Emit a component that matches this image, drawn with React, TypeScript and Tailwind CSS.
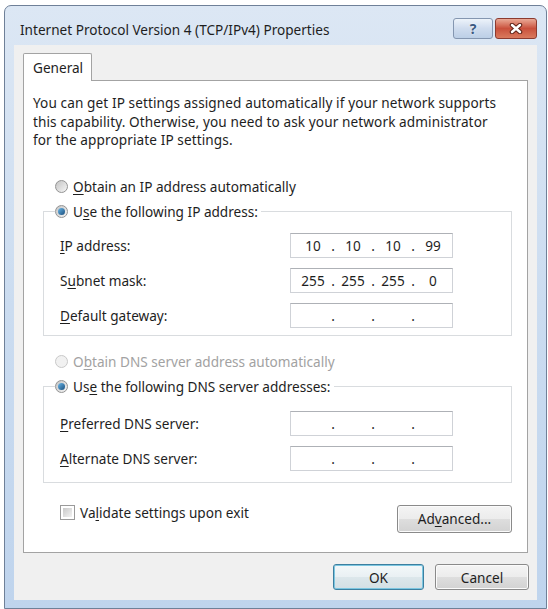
import { Fragment } from "react"

function Acc({ children }: { children: string }) {
  return <span className="underline underline-offset-[2px] decoration-1">{children}</span>
}

function Radio({ checked, disabled }: { checked?: boolean; disabled?: boolean }) {
  if (disabled) {
    return <span className="w-[13px] h-[13px] rounded-full border border-[#c9c9c9] bg-[#f1f1f1] shrink-0" />
  }
  return (
    <span className="w-[13px] h-[13px] rounded-full border border-[#939393] bg-gradient-to-br from-[#c4c4c4] to-[#f6f6f6] flex items-center justify-center shrink-0">
      {checked && <span className="w-[7px] h-[7px] rounded-full bg-gradient-to-br from-[#6ab8ea] to-[#1b4f7d]" />}
    </span>
  )
}

function IpField({ parts }: { parts?: string[] }) {
  const p = parts ?? ["", "", "", ""]
  return (
    <div className="w-[163px] h-[25px] border border-[#cfd2d7] border-t-[#aeb1b6] bg-white flex items-center pl-[5px]">
      {p.map((v, i) => (
        <Fragment key={i}>
          <span className="w-[34px] text-center">{v}</span>
          {i < 3 && <span className="w-[6px] text-center">.</span>}
        </Fragment>
      ))}
    </div>
  )
}

function FieldRow({ label, parts, first }: { label: React.ReactNode; parts?: string[]; first?: string }) {
  return (
    <div className={`flex items-center h-[25px] ${first ?? "mt-[10px]"}`}>
      <span className="w-[230px]">{label}</span>
      <IpField parts={parts} />
    </div>
  )
}

const btn =
  "h-[26px] rounded-[3px] border border-[#8a8a8a] bg-[linear-gradient(#f4f4f4,#ececec_50%,#dedede_50%,#d2d2d2)] shadow-[inset_0_0_0_1px_#fbfbfb] flex items-center justify-center"

export default function App() {
  return (
    <div className="w-[548px] h-[609px] bg-white overflow-hidden pt-[5px] pl-[4px] font-['Noto_Sans',sans-serif] text-[13.6px] leading-[17px] text-[#1e1e1e]">
      <div className="w-[543px] h-[604px] rounded-t-[7px] border border-[#6f8098] bg-gradient-to-b from-[#dce7f4] via-[#cbdcf0] to-[#bfd4ed] flex flex-col px-[9px]">
        {/* title bar */}
        <div className="h-[39px] flex items-start">
          <span className="ml-[6px] mt-[15px] leading-[18px]">Internet Protocol Version 4 (TCP/IPv4) Properties</span>
          <div className="ml-auto mt-[12px] flex gap-[2px]">
            <div className="w-[40px] h-[21px] rounded-[3px] border border-[#8496b0] bg-gradient-to-b from-[#edf3fa] via-[#cfdcee] to-[#bccfe6] flex items-center justify-center">
              <span className="font-bold text-[14px] leading-none text-[#3b5a82] [text-shadow:0_0_2px_#ffffff]">?</span>
            </div>
            <div className="w-[42px] h-[21px] rounded-[3px] border border-[#8c3b30] bg-gradient-to-b from-[#e9a996] via-[#c9503c] to-[#d97a5e] flex items-center justify-center">
              <svg width="14" height="11" viewBox="0 0 14 11">
                <path d="M3 2 L11 9 M11 2 L3 9" stroke="#5e2217" strokeWidth="4.5" strokeLinecap="round" />
                <path d="M3 2 L11 9 M11 2 L3 9" stroke="#ffffff" strokeWidth="2.5" strokeLinecap="round" />
              </svg>
            </div>
          </div>
        </div>

        {/* client */}
        <div className="h-[555px] bg-[#f0f0f0] flex flex-col px-[9px] pt-[8px]">
          <div className="relative z-10 -mb-px w-[69px] h-[28px] bg-white border border-b-0 border-[#a3a3a3] rounded-t-[2px] flex items-center pl-[9px] pb-[1px]">
            General
          </div>
          <div className="h-[473px] border border-[#a3a3a3] bg-white flex flex-col">
            <p className="pl-[9px] pt-[13px] whitespace-nowrap tracking-[0.1px] leading-[18.5px]">
              You can get IP settings assigned automatically if your network supports
              <br />
              this capability. Otherwise, you need to ask your network administrator
              <br />
              for the appropriate IP settings.
            </p>

            <div className="mt-[28px] ml-[31px] flex items-center gap-[5px]">
              <Radio />
              <span>
                <Acc>O</Acc>btain an IP address automatically
              </span>
            </div>

            <fieldset className="mt-[8px] ml-[19px] w-[469px] border border-[#d9dcdf] pb-[7px]">
              <legend className="ml-[11px] pr-[3px] flex items-center gap-[5px]">
                <Radio checked />
                <span>
                  U<Acc>s</Acc>e the following IP address:
                </span>
              </legend>
              <div className="pl-[16px]">
                <FieldRow
                  first="mt-[13px]"
                  label={
                    <>
                      <Acc>I</Acc>P address:
                    </>
                  }
                  parts={["10", "10", "10", "99"]}
                />
                <FieldRow
                  label={
                    <>
                      S<Acc>u</Acc>bnet mask:
                    </>
                  }
                  parts={["255", "255", "255", "0"]}
                />
                <FieldRow
                  label={
                    <>
                      <Acc>D</Acc>efault gateway:
                    </>
                  }
                />
              </div>
            </fieldset>

            <div className="mt-[17px] ml-[31px] flex items-center gap-[5px] text-[#a2a2a2]">
              <Radio disabled />
              <span>
                O<Acc>b</Acc>tain DNS server address automatically
              </span>
            </div>

            <fieldset className="mt-[8px] ml-[19px] w-[469px] border border-[#d9dcdf] pb-[11px]">
              <legend className="ml-[11px] pr-[3px] flex items-center gap-[5px]">
                <Radio checked />
                <span>
                  Us<Acc>e</Acc> the following DNS server addresses:
                </span>
              </legend>
              <div className="pl-[16px]">
                <FieldRow
                  first="mt-[16px]"
                  label={
                    <>
                      <Acc>P</Acc>referred DNS server:
                    </>
                  }
                />
                <FieldRow
                  label={
                    <>
                      <Acc>A</Acc>lternate DNS server:
                    </>
                  }
                />
              </div>
            </fieldset>

            <div className="mt-[21px] flex items-start">
              <span className="ml-[36px] mt-[1px] w-[15px] h-[15px] border border-[#9a9a9a] bg-white p-[2px] shrink-0">
                <span className="block w-full h-full bg-gradient-to-br from-[#c9c9c9] to-[#f3f3f3]" />
              </span>
              <span className="ml-[5px]">
                Va<Acc>l</Acc>idate settings upon exit
              </span>
              <button className={`${btn} ml-auto mr-[15px] mt-[1px] w-[115px] h-[28px]`}>
                Ad<Acc>v</Acc>anced...
              </button>
            </div>
          </div>

          <div className="mt-[11px] flex justify-end gap-[11px] mr-[-1px]">
            <button className="w-[91px] h-[26px] rounded-[3px] border border-[#3c7fa0] shadow-[inset_0_0_0_1px_#7cc6e0] bg-[linear-gradient(#f3f8fa,#e9f0f3_50%,#dce7eb_50%,#d3dfe4)] flex items-center justify-center">
              OK
            </button>
            <button className={`${btn} w-[94px]`}>Cancel</button>
          </div>
        </div>
      </div>
    </div>
  )
}
